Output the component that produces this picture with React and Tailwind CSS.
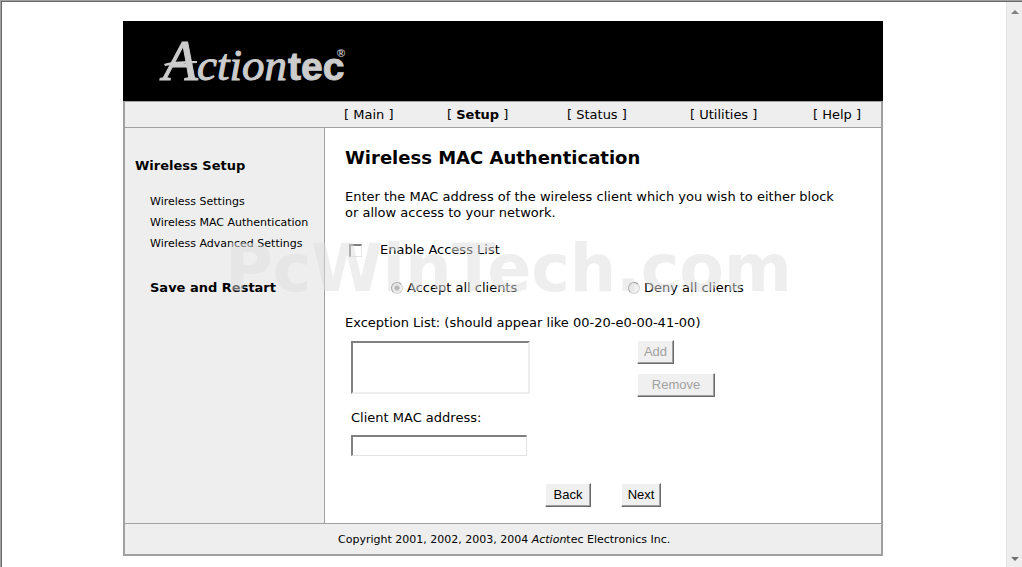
import React from "react";

const navItems = [
  { name: "Main" },
  { name: "Setup", active: true },
  { name: "Status" },
  { name: "Utilities" },
  { name: "Help" },
];

const sideLinks = [
  "Wireless Settings",
  "Wireless MAC Authentication",
  "Wireless Advanced Settings",
];

function Logo() {
  return (
    <svg width="200" height="56" viewBox="0 0 200 56" fill="#cccccc" role="img" aria-label="Actiontec">
      <path d="M9 31 C18 28 30 28 42 28 L42 30 C30 31 20 31 10 33 Z" />
      <text y="47" fontFamily="'Liberation Serif', serif" fontStyle="italic" stroke="#cccccc">
        <tspan x="8" fontSize="57">A</tspan>
        <tspan x="42" fontSize="45">ction</tspan>
      </text>
      <text x="133" y="47" fontFamily="'Liberation Sans', sans-serif" fontWeight="bold" fontSize="39" stroke="#cccccc">
        tec
      </text>
      <text x="182" y="24" fontFamily="'Liberation Sans', sans-serif" fontWeight="bold" fontSize="11">
        ®
      </text>
    </svg>
  );
}

function Button({ className = "", ...props }) {
  return (
    <button
      type="button"
      className={`h-6 border border-t-white border-l-white border-r-[#696969] border-b-[#696969] bg-[#f0f0f0] text-center font-['Liberation_Sans',sans-serif] text-[13px] leading-5 shadow-[inset_-1px_-1px_0_#a0a0a0] disabled:text-[#a0a0a0] ${className}`}
      {...props}
    />
  );
}

function Radio({ label, ...props }) {
  return (
    <label className="flex items-center gap-1">
      <input
        type="radio"
        name="policy"
        disabled
        className="size-3 appearance-none rounded-full border border-t-[#808080] border-r-[#d4d4d4] border-b-[#d4d4d4] border-l-[#808080] bg-[#f0f0f0] checked:bg-[radial-gradient(circle,#909090_2px,#f0f0f0_3px)]"
        {...props}
      />
      {label}
    </label>
  );
}

function Scrollbar() {
  return (
    <div className="flex w-4 shrink-0 flex-col items-center justify-between border-l border-[#e3e3e3] bg-[#eeeeee] pt-2 pb-[6px]">
      <svg width="8" height="4" viewBox="0 0 8 4" fill="#808080">
        <path d="M4 0 L8 4 H0 Z" />
      </svg>
      <svg width="8" height="4" viewBox="0 0 8 4" fill="#707070">
        <path d="M0 0 H8 L4 4 Z" />
      </svg>
    </div>
  );
}

function App() {
  return (
    <div className="min-h-screen border-t border-l border-[#a0a0a0] bg-white font-['DejaVu_Sans',sans-serif] text-[13px] leading-4 text-black">
      <div className="flex min-h-[calc(100vh-1px)] border-t border-l border-[#696969]">
        <div className="flex grow justify-center pt-[19px] pr-0.5 pb-[11px]">
          <div className="relative flex w-full max-w-[760px] flex-col">
            <header className="flex h-20 items-center bg-black pl-8">
              <Logo />
            </header>

            <div className="flex grow flex-col border-2 border-t border-[#a0a0a0]">
              {/* Top navigation */}
              <nav className="grid grid-cols-[103px_120px_123px_123px_auto] border-b border-[#a0a0a0] bg-[#eeeeee] pt-[5px] pb-1 pl-[219px]">
                {navItems.map((item) => (
                  <span key={item.name}>
                    [{" "}
                    <a href="#" className={item.active ? "font-bold" : ""}>
                      {item.name}
                    </a>{" "}
                    ]
                  </span>
                ))}
              </nav>

              <div className="flex grow">
                {/* Sidebar */}
                <aside className="w-[200px] shrink-0 border-r border-[#a0a0a0] bg-[#eeeeee] pt-[30px] pl-[10px]">
                  <h2 className="font-bold">Wireless Setup</h2>
                  <ul className="mt-[17px] pl-[15px] text-[11px] leading-[21px]">
                    {sideLinks.map((link) => (
                      <li key={link}>
                        <a href="#">{link}</a>
                      </li>
                    ))}
                  </ul>
                  <a href="#" className="mt-[26px] block pl-[15px] font-bold">
                    Save and Restart
                  </a>
                </aside>

                {/* Access list form */}
                <main className="grow pt-5 pr-8 pb-4 pl-5">
                  <h1 className="text-[18px] leading-5 font-bold">Wireless MAC Authentication</h1>
                  <p className="mt-[21px]">
                    Enter the MAC address of the wireless client which you wish to either block or
                    allow access to your network.
                  </p>

                  <label className="mt-[21px] flex items-center gap-[18px] pl-1">
                    <input
                      type="checkbox"
                      className="size-[13px] appearance-none border-t-2 border-l-2 border-r border-b border-t-[#808080] border-l-[#808080] border-r-[#e3e3e3] border-b-[#e3e3e3] bg-white"
                    />
                    Enable Access List
                  </label>

                  <div className="mt-[22px] grid grid-cols-[237px_auto] pl-[46px]">
                    <Radio label="Accept all clients" defaultChecked />
                    <Radio label="Deny all clients" />
                  </div>

                  <label htmlFor="exceptions" className="mt-[19px] block">
                    Exception List: (should appear like 00-20-e0-00-41-00)
                  </label>
                  <div className="mt-[9px] grid grid-cols-[286px_auto] pl-[6px]">
                    <select
                      id="exceptions"
                      size="3"
                      className="mt-px h-[53px] w-[179px] appearance-none border-2 border-t-[#808080] border-r-[#eeeeee] border-b-[#eeeeee] border-l-[#808080] bg-white"
                    />
                    <div className="flex flex-col items-start gap-[9px]">
                      <Button disabled className="w-[37px]">
                        Add
                      </Button>
                      <Button disabled className="w-[78px]">
                        Remove
                      </Button>
                    </div>
                  </div>

                  <label htmlFor="mac" className="mt-[13px] block pl-[6px]">
                    Client MAC address:
                  </label>
                  <div className="mt-[9px] pl-[6px]">
                    <input
                      id="mac"
                      type="text"
                      className="block h-[21px] w-[176px] border border-t-2 border-l-2 border-t-[#808080] border-r-[#e3e3e3] border-b-[#e3e3e3] border-l-[#808080] bg-white px-1"
                    />
                  </div>

                  <div className="mt-[27px] flex gap-[30px] pl-[200px]">
                    <Button className="w-[46px]">Back</Button>
                    <Button className="w-10">Next</Button>
                  </div>
                </main>
              </div>

              <footer className="border-t border-[#a0a0a0] bg-[#eeeeee] pt-2 pb-[6px] pl-[213px] text-[11px] leading-4">
                Copyright 2001, 2002, 2003, 2004 <i>Action</i>tec Electronics Inc.
              </footer>
            </div>

            {/* Watermark */}
            <div className="pointer-events-none absolute top-[210px] left-[102px] text-[65px] leading-[76px] font-bold text-[#dddddd]/50">
              PcWinTech.com
            </div>
          </div>
        </div>
        <Scrollbar />
      </div>
    </div>
  );
}

export default App;
